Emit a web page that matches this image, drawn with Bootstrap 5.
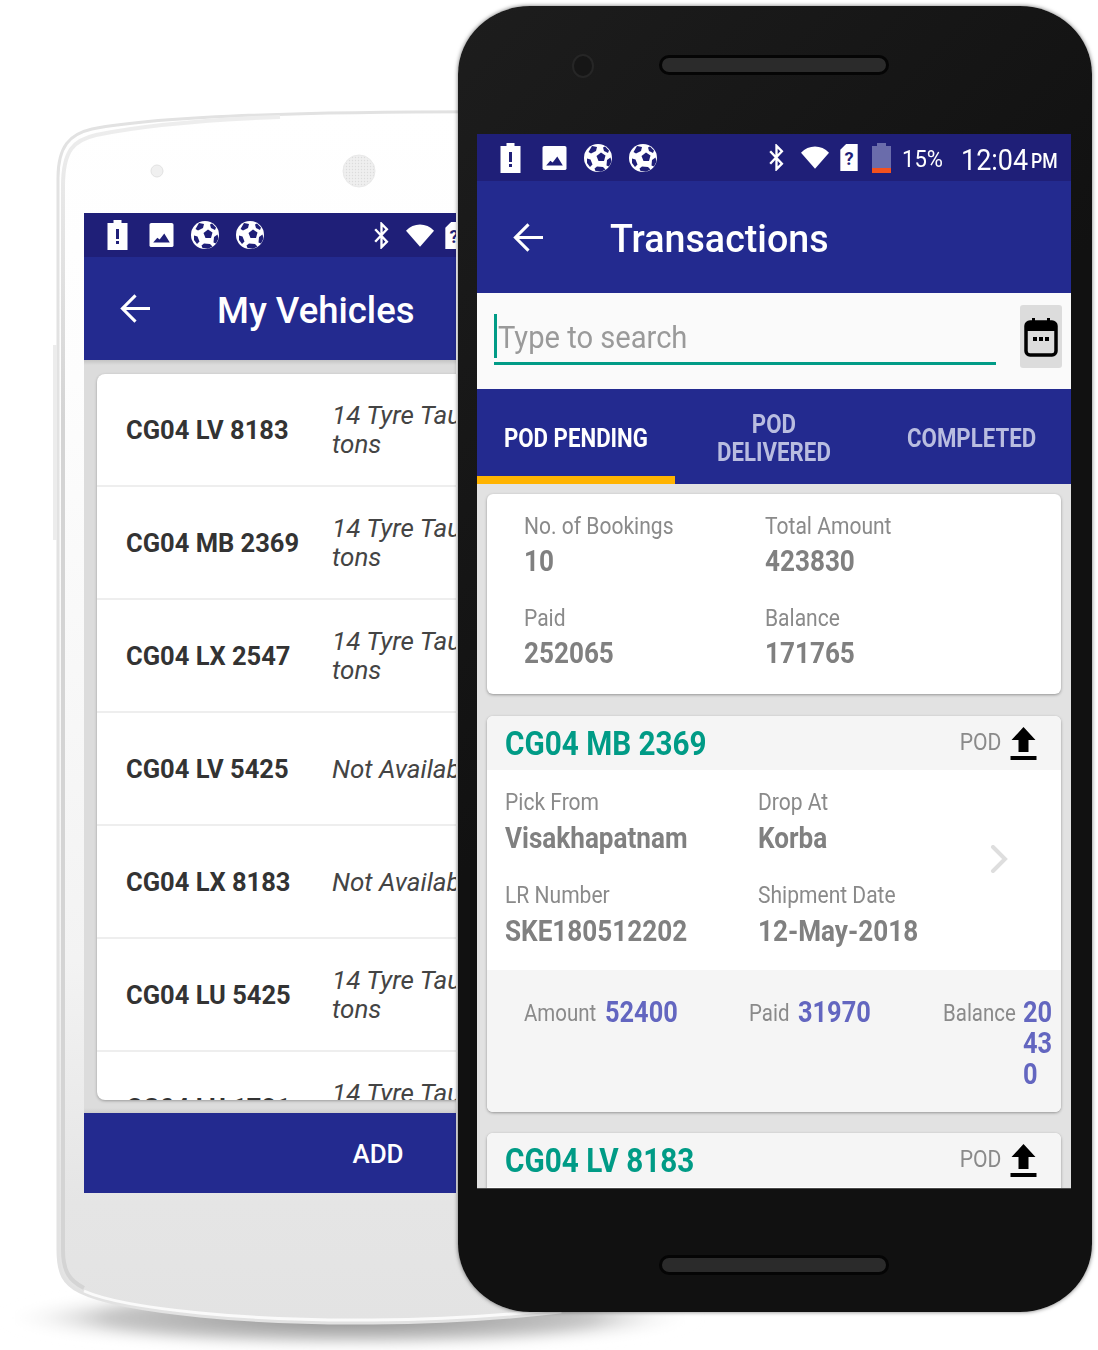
<!DOCTYPE html>
<html lang="en">
<head>
  <meta charset="UTF-8">
  <title>Transactions</title>
  <link href="https://cdn.jsdelivr.net/npm/bootstrap@5.3.3/dist/css/bootstrap.min.css" rel="stylesheet">
  <style>
    body { margin: 0; background: #fff; font-family: Roboto, "Liberation Sans", sans-serif; }
    .stage { position: relative; width: 1098px; height: 1350px; overflow: hidden; background: #fff; }
    .back-shape { position: absolute; left: 0; top: 0; }
    /* the screenshots are squeezed sideways, so the text is too */
    .sq { display: inline-block; transform-origin: left center; }
    .st-group { gap: 16px; }
    .sim-tight { margin-left: -5px; }
    .batt-tight { margin-left: -2px; }

    /* back phone */
    .back-screen { position: absolute; left: 84px; top: 213px; width: 372px; height: 980px; overflow: hidden; }
    .back-inner { width: 588px; height: 980px; }
    .bar-status { background: #1f1f78; }
    .bar-main { background: #232a8f; color: #fff; }
    .back-status { height: 44px; padding-left: 23px; }
    .back-status .gap-icons { gap: 17px; }
    .back-status .st-group { margin-left: 109px; }
    .back-tool { height: 103px; padding-left: 36px; }
    .back-tool .tool-title { margin: 5px 0 0 66px; font-size: 36.500px; font-weight: 500; }
    .back-list { height: 753px; padding: 14px 13px 13px; background: linear-gradient(#c4c4c4, #dcdcdc 5px, #dcdcdc calc(100% - 5px), #cdcdcd); }
    .veh-card { height: 726px; background: #fff; border-radius: 8px; overflow: hidden; box-shadow: 0 1px 3px rgba(0,0,0,.3); }
    .veh-row { height: 113px; padding-left: 29px; border-bottom: 2px solid #eee; color: #333; }
    .veh-no { width: 206px; font-size: 25.500px; font-weight: 700; flex: none; padding-top: 2px; }
    .veh-type { font-size: 26px; font-style: italic; line-height: 29px; padding-top: 1px; width: 240px; color: #444; }
    .add-bar { height: 80px; font-size: 26px; font-weight: 500; padding-top: 3px; }

    /* front phone */
    .front-phone { position: absolute; left: 458px; top: 6px; width: 634px; height: 1306px; padding: 128px 21px 0 19px; border-radius: 72px / 68px; background: linear-gradient(135deg, #1d1d1d, #111 45%); box-shadow: 0 0 4px rgba(0,0,0,.55); }
    .cam { position: absolute; left: 114px; top: 48px; width: 22px; height: 24px; border-radius: 50%; background: #161616; border: 2px solid #262626; }
    .speaker { position: absolute; left: 201px; width: 230px; height: 20px; border-radius: 10px; background: #2b2b2b; border: 3px solid #050505; }
    .speaker-top { top: 49px; }
    .speaker-bottom { top: 1249px; }
    .front-screen { height: 1054px; overflow: hidden; background: #e2e2e2; box-shadow: 0 1px 0 #4a4a4a; }
    .front-status { height: 47px; padding: 0 14px 0 23px; }
    .st-icons { gap: 17px; }
    .pct { font-size: 23px; margin: 5px 0 0 11px; transform: scaleX(.96); width: 59px; }
    .clock { font-size: 29px; line-height: 1; margin-top: 5px; transform: scaleX(.93); width: 70px; }
    .clock-pm { font-size: 20px; font-weight: 500; margin-top: 6px; transform: scaleX(.88); width: 26px; }
    .front-tool { height: 112px; padding-left: 36px; }
    .front-tool .tool-title { margin: 4px 0 0 66px; font-size: 39px; font-weight: 500; transform: scaleX(.965); }
    .search-box { height: 96px; background: #fafafa; padding: 12px 9px 0 17px; }
    .search-field { width: 502px; height: 51px; margin-top: 9px; border-bottom: 3px solid #009b86; font-size: 32px; color: #9a9a9a; line-height: 47px; }
    .caret-mark { display: inline-block; width: 3px; height: 44px; background: #009b86; vertical-align: top; margin-right: 1px; }
    .search-text { transform: scaleX(.91); }
    .cal-btn { width: 42px; height: 63px; background: #dcdcdc; border-radius: 3px; margin-left: auto; }
    .tab-bar { height: 95px; }
    .tab-item { width: 198px; padding-top: 13px; font-size: 25px; font-weight: 700; line-height: 28px; text-align: center; color: #b9bde0; border-bottom: 8px solid transparent; }
    .tab-item span { display: inline-block; transform: scaleX(.89); }
    .tab-on { color: #fff; border-bottom-color: #ffb300; }
    .front-list { padding: 10px 10px 0; }
    .info-card { background: #fff; border-radius: 6px; box-shadow: 0 1px 3px rgba(0,0,0,.35); overflow: hidden; }
    .sum-card { height: 200px; padding: 18px 0 0 37px; margin-bottom: 22px; }
    .sum-col-a { width: 241px; }
    .lbl { font-size: 23px; line-height: 29px; color: #8a8a8a; transform: scaleX(.915); transform-origin: left; }
    .val { font-size: 29px; font-weight: 700; line-height: 38px; color: #808080; margin: 1px 0 24px; transform: scaleX(.9); transform-origin: left; }
    .head-strip { height: 54px; background: #f5f5f5; padding: 0 24px 0 18px; }
    .plate { font-size: 33px; font-weight: 700; color: #009b86; padding-top: 1px; transform: scaleX(.9); }
    .pod { font-size: 23px; color: #8a8a8a; margin-left: auto; margin-right: 9px; transform: scaleX(.92); transform-origin: right; }
    .trip-body { height: 200px; padding: 18px 0 0 18px; position: relative; }
    .trip-body .val { margin: 2px 0 24px; }
    .trip-a { width: 253px; }
    .chev { position: absolute; left: 502px; top: 75px; }
    .trip-foot { height: 142px; background: #f5f5f5; padding-top: 27px; }
    .foot-lbl { flex: none; font-size: 23px; line-height: 33px; color: #8a8a8a; transform: scaleX(.89); }
    .foot-num { font-size: 29px; font-weight: 700; color: #6366c0; line-height: 31px; transform: scaleX(.875); }
    .foot-a { margin-left: 37px; width: 225px; }
    .foot-b { width: 194px; }
    .lbl-a { width: 81px; }
    .lbl-b { width: 49px; }
    .lbl-c { width: 80px; }
    .next-card { margin-top: 21px; height: 80px; }
  </style>
</head>
<body>
<svg width="0" height="0" class="position-absolute">
  <defs>
    <symbol id="ic-batt" viewBox="0 0 20 30"><path fill="#fff" d="M6 0h8v3h6v27H0V3h6z"/><path fill="#1f1f78" d="M8.500 9h3v10h-3zM8.500 21h3v3h-3z"/></symbol>
    <symbol id="ic-img" viewBox="0 0 26 26"><rect width="26" height="26" rx="2" fill="#fff"/><path fill="#1f1f78" d="M4 21l4.500-5 2.500 2 5-6.500 6 9.500z"/></symbol>
    <symbol id="ic-ball" viewBox="0 0 28 28"><circle cx="14" cy="14" r="14" fill="#fff"/><path fill="#1f1f78" d="M17 8.500l4.500 3-1.500 5.500h-5.500l-2-5zM8 2l5 1-1 4-5 2.500-2.500-1.500zM21 2.500l4 4-1 2.500-4-2-1-3.500zM3 14.500l3.500 1 2 5-2.500 2.500-3-4zM13 22.500l6 .5 2.500 2.500-4.500 2.300-5.500-.8-1-2.500zM26.500 13.500l1 4-2.500 5-2.500-1 .5-5.500z"/></symbol>
    <symbol id="ic-bt" viewBox="0 0 18 30"><path fill="none" stroke="#fff" stroke-width="2.600" d="M2 8l13 14-6 6V2l6 6L2 22"/></symbol>
    <symbol id="ic-wifi" viewBox="0 0 30 24"><path fill="#fff" d="M0 7C8-2 22-2 30 7L15 24z"/></symbol>
    <symbol id="ic-sim" viewBox="0 0 18 28"><path fill="#fff" d="M6 0h12v28H0V6z"/><text x="9" y="22" text-anchor="middle" font-size="19" font-weight="700" font-family="Roboto, sans-serif" fill="#1f1f78">?</text></symbol>
    <symbol id="ic-back" viewBox="0 0 32 30"><path fill="none" stroke="#fff" stroke-width="3.200" d="M31 15H3M16 1.500L2.500 15 16 28.500"/></symbol>
    <symbol id="ic-up" viewBox="0 0 26 33"><path fill="#000" d="M13 0l12 13h-7v12H8V13H1zM0 29h26v4H0z"/></symbol>
  </defs>
</svg>

<div class="stage">
  <!-- back phone body + floor shadow -->
  <svg class="back-shape" width="1098" height="1350" viewBox="0 0 1098 1350">
    <defs>
      <filter id="soft" x="-10%" y="-50%" width="120%" height="200%"><feGaussianBlur stdDeviation="6"/></filter>
      <radialGradient id="floor">
        <stop offset="0" stop-color="#8e8e8e"/><stop offset=".7" stop-color="#c6c6c6"/><stop offset="1" stop-color="#fff" stop-opacity="0"/>
      </radialGradient>
      <linearGradient id="backFill" x1="0" y1="0" x2="0" y2="1">
        <stop offset="0" stop-color="#fff"/><stop offset=".22" stop-color="#fdfdfd"/><stop offset=".7" stop-color="#f3f3f3"/><stop offset=".9" stop-color="#e5e5e5"/><stop offset="1" stop-color="#e3e3e3"/>
      </linearGradient>
      <linearGradient id="sideBand" gradientUnits="userSpaceOnUse" x1="0" y1="130" x2="0" y2="420">
        <stop offset="0" stop-color="#ededed"/><stop offset="1" stop-color="#d4d4d4"/>
      </linearGradient>
      <pattern id="mesh" width="3" height="3" patternUnits="userSpaceOnUse"><rect width="3" height="3" fill="#efefef"/><circle cx="1.500" cy="1.500" r=".7" fill="#dcdcdc"/></pattern>
    </defs>
    <ellipse cx="350" cy="1318" rx="350" ry="30" fill="url(#floor)" filter="url(#soft)"/>
    <path d="M58 178C58 146 70 134 92 129C150 118 280 110 560 112V1312C440 1326 300 1326 200 1316C140 1310 100 1302 80 1292C64 1284 58 1274 58 1250Z" fill="url(#backFill)" stroke="#e2e2e2" stroke-width="3"/>
    <path d="M280 117C200 120 140 126 96 135C74 140 63 150 63 186V1250C63 1272 70 1281 84 1288" fill="none" stroke="url(#sideBand)" stroke-width="4"/>
    <path d="M84 1291C104 1300 140 1307 200 1313C300 1323 440 1323 560 1309" fill="none" stroke="#fafafa" stroke-width="3"/>
    <path d="M53 345h4v195h-4z" fill="#ececec"/>
    <circle cx="157" cy="171" r="6" fill="#f0f0f0" stroke="#e2e2e2"/>
    <circle cx="359" cy="171" r="16" fill="url(#mesh)" stroke="#e9e9e9"/>
  </svg>

  <div class="back-screen">
    <div class="back-inner d-flex flex-column">
      <div class="bar-status back-status d-flex align-items-center">
        <div class="gap-icons d-flex align-items-center">
          <svg width="21" height="30"><use href="#ic-batt"/></svg>
          <svg width="25" height="24" class="ms-1"><use href="#ic-img"/></svg>
          <svg width="28" height="28"><use href="#ic-ball"/></svg>
          <svg width="28" height="28"><use href="#ic-ball"/></svg>
        </div>
        <div class="st-group d-flex align-items-center">
          <svg width="17" height="27"><use href="#ic-bt"/></svg>
          <svg width="28" height="23"><use href="#ic-wifi"/></svg>
          <svg width="18" height="27" class="sim-tight"><use href="#ic-sim"/></svg>
        </div>
      </div>
      <div class="bar-main back-tool d-flex align-items-center">
        <svg width="31" height="29"><use href="#ic-back"/></svg>
        <span class="tool-title">My Vehicles</span>
      </div>
      <div class="back-list">
        <div class="veh-card">
          <div class="veh-row d-flex align-items-center"><span class="veh-no">CG04 LV 8183</span><span class="veh-type">14 Tyre Taurus 25 tons</span></div>
          <div class="veh-row d-flex align-items-center"><span class="veh-no">CG04 MB 2369</span><span class="veh-type">14 Tyre Taurus 25 tons</span></div>
          <div class="veh-row d-flex align-items-center"><span class="veh-no">CG04 LX 2547</span><span class="veh-type">14 Tyre Taurus 25 tons</span></div>
          <div class="veh-row d-flex align-items-center"><span class="veh-no">CG04 LV 5425</span><span class="veh-type">Not Available</span></div>
          <div class="veh-row d-flex align-items-center"><span class="veh-no">CG04 LX 8183</span><span class="veh-type">Not Available</span></div>
          <div class="veh-row d-flex align-items-center"><span class="veh-no">CG04 LU 5425</span><span class="veh-type">14 Tyre Taurus 25 tons</span></div>
          <div class="veh-row d-flex align-items-center"><span class="veh-no">CG04 LU 1721</span><span class="veh-type">14 Tyre Taurus 25 tons</span></div>
        </div>
      </div>
      <div class="bar-main add-bar d-flex align-items-center justify-content-center">ADD</div>
    </div>
  </div>

  <!-- front phone -->
  <div class="front-phone">
    <div class="cam"></div>
    <div class="speaker speaker-top"></div>
    <div class="speaker speaker-bottom"></div>
    <div class="front-screen">
      <div class="bar-status front-status d-flex align-items-center text-white">
        <div class="st-icons d-flex align-items-center">
          <svg width="21" height="30"><use href="#ic-batt"/></svg>
          <svg width="25" height="24" class="ms-1"><use href="#ic-img"/></svg>
          <svg width="28" height="28"><use href="#ic-ball"/></svg>
          <svg width="28" height="28"><use href="#ic-ball"/></svg>
        </div>
        <div class="st-group d-flex align-items-center ms-auto">
          <svg width="17" height="27"><use href="#ic-bt"/></svg>
          <svg width="28" height="23"><use href="#ic-wifi"/></svg>
          <svg width="18" height="27" class="sim-tight"><use href="#ic-sim"/></svg>
          <svg width="19" height="30" viewBox="0 0 19 30" class="batt-tight"><path fill="#6a6cab" d="M5 0h9v3h5v27H0V3h5z"/><path fill="#f4511e" d="M0 25h19v5H0z"/></svg>
        </div>
        <span class="pct sq">15%</span>
        <span class="clock sq">12:04</span>
        <span class="clock-pm sq">PM</span>
      </div>
      <div class="bar-main front-tool d-flex align-items-center">
        <svg width="31" height="29"><use href="#ic-back"/></svg>
        <span class="tool-title sq">Transactions</span>
      </div>
      <div class="search-box d-flex align-items-start">
        <div class="search-field"><span class="caret-mark"></span><span class="search-text sq">Type to search</span></div>
        <div class="cal-btn d-flex align-items-center justify-content-center">
          <svg width="34" height="40" viewBox="0 0 34 40"><rect x="2" y="5" width="30" height="33" rx="4" fill="#dcdcdc" stroke="#000" stroke-width="3.500"/><path d="M2 5h30v9H2zM8 1h3v6H8zM23 1h3v6h-3z"/><path d="M9 20h4v4H9zM15 20h4v4h-4zM21 20h4v4h-4z"/></svg>
        </div>
      </div>
      <div class="bar-main tab-bar d-flex">
        <div class="tab-item tab-on d-flex align-items-center justify-content-center"><span>POD PENDING</span></div>
        <div class="tab-item d-flex align-items-center justify-content-center"><span>POD<br>DELIVERED</span></div>
        <div class="tab-item d-flex align-items-center justify-content-center"><span>COMPLETED</span></div>
      </div>
      <div class="front-list">
        <div class="info-card sum-card">
          <div class="d-flex">
            <div class="sum-col-a"><div class="lbl">No. of Bookings</div><div class="val">10</div></div>
            <div><div class="lbl">Total Amount</div><div class="val">423830</div></div>
          </div>
          <div class="d-flex">
            <div class="sum-col-a"><div class="lbl">Paid</div><div class="val">252065</div></div>
            <div><div class="lbl">Balance</div><div class="val">171765</div></div>
          </div>
        </div>
        <div class="info-card">
          <div class="head-strip d-flex align-items-center">
            <span class="plate sq">CG04 MB 2369</span><span class="pod sq">POD</span>
            <svg width="27" height="33"><use href="#ic-up"/></svg>
          </div>
          <div class="trip-body">
            <div class="d-flex">
              <div class="trip-a"><div class="lbl">Pick From</div><div class="val">Visakhapatnam</div></div>
              <div><div class="lbl">Drop At</div><div class="val">Korba</div></div>
            </div>
            <div class="d-flex">
              <div class="trip-a"><div class="lbl">LR Number</div><div class="val">SKE180512202</div></div>
              <div><div class="lbl">Shipment Date</div><div class="val">12-May-2018</div></div>
            </div>
            <svg class="chev" width="20" height="28" viewBox="0 0 20 28"><path fill="none" stroke="#dedede" stroke-width="4" stroke-linecap="round" d="M4 2l12 12L4 26"/></svg>
          </div>
          <div class="trip-foot d-flex">
            <div class="foot-a d-flex align-items-start"><span class="foot-lbl lbl-a sq">Amount</span><span class="foot-num sq">52400</span></div>
            <div class="foot-b d-flex align-items-start"><span class="foot-lbl lbl-b sq">Paid</span><span class="foot-num sq">31970</span></div>
            <div class="d-flex align-items-start"><span class="foot-lbl lbl-c sq">Balance</span><span class="foot-num sq">20<br>43<br>0</span></div>
          </div>
        </div>
        <div class="info-card next-card">
          <div class="head-strip d-flex align-items-center">
            <span class="plate sq">CG04 LV 8183</span><span class="pod sq">POD</span>
            <svg width="27" height="33"><use href="#ic-up"/></svg>
          </div>
        </div>
      </div>
    </div>
  </div>
</div>
<script src="https://cdn.jsdelivr.net/npm/bootstrap@5.3.3/dist/js/bootstrap.bundle.min.js"></script>
</body>
</html>
